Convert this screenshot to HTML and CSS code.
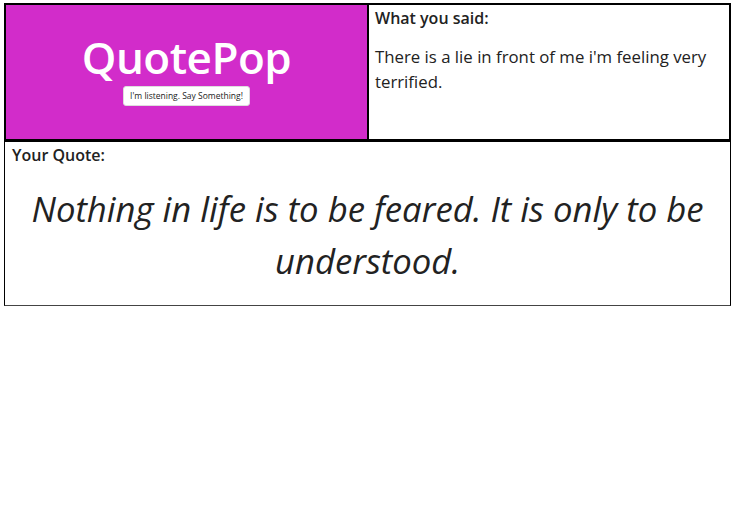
FILE: index.html
```html
<!DOCTYPE html>
<html lang="en">
<head>
<meta charset="utf-8">
<title>QuotePop</title>
<link rel="stylesheet" href="styles.css">
</head>
<body>
<div class="app">
  <div class="top">
    <div class="brand">
      <h1 class="logo">QuotePop</h1>
      <button class="listen">I'm listening. Say Something!</button>
    </div>
    <div class="said">
      <h2 class="label">What you said:</h2>
      <p class="said-text">There is a lie in front of me i'm feeling very terrified.</p>
    </div>
  </div>
  <div class="quote">
    <h2 class="label">Your Quote:</h2>
    <p class="quote-text">Nothing in life is to be feared. It is only to be understood.</p>
  </div>
</div>
</body>
</html>
```
FILE: styles.css
```css
* { box-sizing: border-box; }
body {
  margin: 0;
  font-family: "Open Sans", "Noto Sans", sans-serif;
  color: #222;
  background: #fff;
}
.app {
  width: 727px;
  margin: 3px 0 0 4px;
}
.top {
  display: grid;
  grid-template-columns: 361px 1fr;
  height: 139px;
  border: 2px solid #000;
  border-bottom-width: 3px;
}
.brand {
  background: #d22cca;
  display: flex;
  flex-direction: column;
  align-items: center;
  justify-content: center;
  padding-bottom: 8px;
}
.logo {
  margin: 0;
  color: #fff;
  font-weight: 600;
  font-size: 44px;
  line-height: 52px;
  letter-spacing: -0.5px;
}
.listen {
  margin-top: 3px;
  background: #fff;
  border: 1px solid #ddd;
  border-radius: 3px;
  font-family: "Open Sans", sans-serif;
  font-size: 8.5px;
  color: #222;
  height: 20px;
  padding: 0 6px;
}
.said {
  border-left: 2px solid #000;
  padding: 2px 6px;
}
.label {
  margin: 0;
  font-size: 16px;
  font-weight: 600;
  line-height: 22px;
}
.said-text {
  margin: 15px 0 0;
  font-size: 16.8px;
  line-height: 25px;
}
.quote {
  height: 164px;
  border: 1px solid #000;
  border-top: none;
  border-bottom-color: #444;
  padding: 2px 7px;
}
.quote-text {
  margin: 17px 0 0;
  text-align: center;
  font-style: italic;
  font-size: 34.7px;
  line-height: 52px;
}
```
